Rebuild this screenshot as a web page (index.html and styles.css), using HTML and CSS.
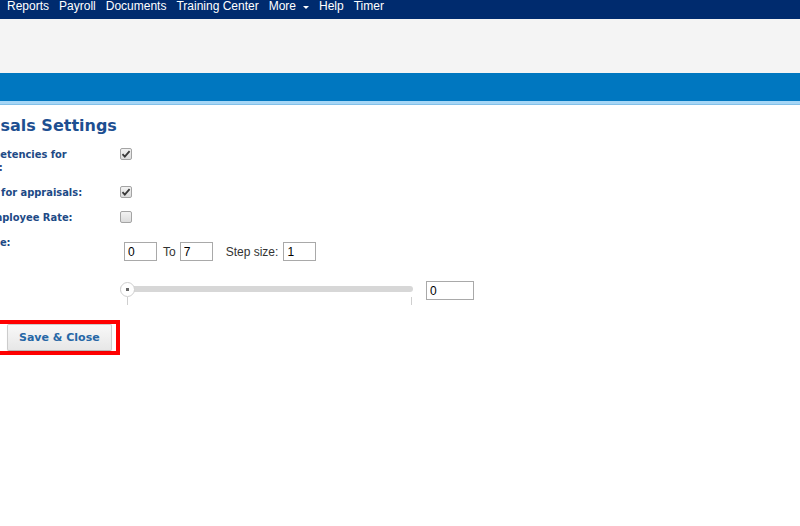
FILE: index.html
```html
<!DOCTYPE html>
<html lang="en">
<head>
    <meta charset="UTF-8">
    <title>Appraisals Settings</title>
    <link rel="stylesheet" href="styles.css">
</head>
<body>
    <div class="topnav">
        <a href="#">Reports</a>
        <a href="#">Payroll</a>
        <a href="#">Documents</a>
        <a href="#">Training Center</a>
        <a href="#" class="more">More <span class="caret"></span></a>
        <a href="#">Help</a>
        <a href="#">Timer</a>
    </div>
    <div class="toolbar"></div>
    <div class="titlebar"></div>

    <div class="content">
        <h1>Appraisals Settings</h1>

        <div class="settings">
            <div class="row">
                <div class="label">Rate competencies for appraisals:</div>
                <div class="control">
                    <span class="checkbox">
                        <svg width="10" height="10" viewBox="0 0 10 10"><path d="M1.5 5.2 L3.8 7.6 L8.6 2.2" fill="none" stroke="#3a3a3a" stroke-width="1.8"/></svg>
                    </span>
                </div>
            </div>
            <div class="row">
                <div class="label">Use levels for appraisals:</div>
                <div class="control">
                    <span class="checkbox">
                        <svg width="10" height="10" viewBox="0 0 10 10"><path d="M1.5 5.2 L3.8 7.6 L8.6 2.2" fill="none" stroke="#3a3a3a" stroke-width="1.8"/></svg>
                    </span>
                </div>
            </div>
            <div class="row">
                <div class="label">Display Employee Rate:</div>
                <div class="control">
                    <span class="checkbox"></span>
                </div>
            </div>
            <div class="row">
                <div class="label">Scale range:</div>
                <div class="control range">
                    <input type="text" class="num" value="0">
                    <span class="word">To</span>
                    <input type="text" class="num" value="7">
                    <span class="word step">Step size:</span>
                    <input type="text" class="num" value="1">
                </div>
            </div>
            <div class="row slider-row">
                <div class="label"></div>
                <div class="control">
                    <div class="slider">
                        <div class="track"></div>
                        <span class="handle"></span>
                        <div class="scale"></div>
                    </div>
                    <input type="text" class="value" value="0">
                </div>
            </div>
        </div>

        <div class="actions">
            <button class="btn">Save &amp; Close</button>
        </div>
    </div>
</body>
</html>
```

FILE: styles.css
```css
body {
    margin: 0;
    overflow: hidden;
    background: #fff;
    font-family: Tahoma, "DejaVu Sans", Verdana, sans-serif;
}

/* top navigation */
.topnav {
    height: 19px;
    background: #002b6e;
    padding-left: 7px;
    display: flex;
    gap: 10px;
    font-family: Arial, "Liberation Sans", sans-serif;
    font-size: 12px;
    line-height: 12px;
}

.topnav a {
    color: #fff;
    text-decoration: none;
}

.topnav .more {
    display: flex;
    align-items: flex-start;
}

.caret {
    display: inline-block;
    margin: 6px 0 0 7px;
    border-left: 3px solid transparent;
    border-right: 3px solid transparent;
    border-top: 3px solid #fff;
}

.toolbar {
    height: 54px;
    background: #f4f4f4;
}

.titlebar {
    height: 28px;
    background: #0077c0;
    border-bottom: 3px solid #a5d6f6;
    box-shadow: 0 1px 0 #83c0e8;
}

/* settings */
.content {
    margin-left: -59px;
    padding-top: 1px;
}

h1 {
    margin: 11px 0 6px 0;
    font-size: 16px;
    line-height: 20px;
    color: #1d4f91;
}

.row {
    display: flex;
}

.label {
    width: 175px;
    flex-shrink: 0;
    padding: 6px 0;
    font-family: "DejaVu Sans Condensed", Tahoma, "DejaVu Sans", sans-serif;
    font-size: 11px;
    line-height: 13px;
    font-weight: bold;
    color: #1d4a86;
}

.control {
    padding-top: 6px;
    display: flex;
    align-items: flex-start;
}

.checkbox {
    display: flex;
    align-items: center;
    justify-content: center;
    width: 10px;
    height: 10px;
    margin: 0 0 0 4px;
    border: 1px solid #a4a4a4;
    border-radius: 2px;
    background: linear-gradient(#f2f2f2, #dcdcdc);
}

.control.range {
    padding-top: 12px;
    align-items: center;
    font-family: Arial, "Liberation Sans", sans-serif;
    font-size: 12px;
    color: #333;
}

.num, .value {
    box-sizing: border-box;
    height: 19px;
    border: 1px solid #a9a9a9;
    padding: 0 3px;
    font-family: Arial, "Liberation Sans", sans-serif;
    font-size: 12px;
    color: #000;
    outline: none;
}

.num {
    width: 33px;
}

.range .num:first-child {
    margin-left: 8px;
}

.word {
    margin: 0 4px 0 6px;
}

.word.step {
    margin: 0 5px 0 13px;
}

/* slider */
.slider-row .control {
    padding-top: 20px;
}

.slider {
    position: relative;
    width: 293px;
    margin: 1px 0 0 4px;
}

.track {
    height: 6px;
    margin-top: 4px;
    border-radius: 3px;
    background: #d7d7d7;
}

.handle {
    position: absolute;
    left: 0;
    top: 0;
    box-sizing: border-box;
    width: 15px;
    height: 15px;
    border: 1px solid #cfcfcf;
    border-radius: 50%;
    background: #fff radial-gradient(circle, #666 0 1.6px, transparent 2px);
}

.scale {
    height: 8px;
    margin: 5px 1px 0 7px;
    border-left: 1px solid #cfcfcf;
    border-right: 1px solid #cfcfcf;
}

.value {
    width: 48px;
    margin-left: 13px;
}

/* buttons */
.actions {
    display: inline-block;
    margin: 15px 0 0 39px;
    padding: 0 4px 0 23px;
    border: 4px solid #ff0000;
}

.btn {
    display: block;
    height: 27px;
    padding: 0 11px;
    border: 1px solid #cccccc;
    border-bottom-color: #b8b8b8;
    border-radius: 2px;
    background: linear-gradient(#f8f8f8, #e7e7e7);
    box-shadow: 0 1px 1px rgba(0,0,0,0.08);
    font-family: Tahoma, "DejaVu Sans", Verdana, sans-serif;
    font-size: 11px;
    font-weight: bold;
    color: #2667a6;
}
```
